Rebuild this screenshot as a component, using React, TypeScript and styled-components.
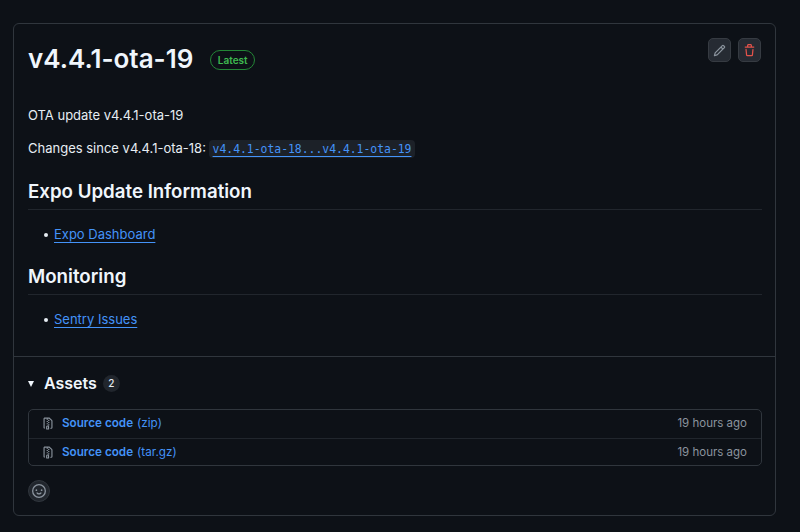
import React from "react";
import styled, { createGlobalStyle } from "styled-components";

const Global = createGlobalStyle`
  html, body { margin: 0; padding: 0; background: #0d1117; }
  body { width: 800px; height: 532px; overflow: hidden; font-family: Inter, "Liberation Sans", sans-serif; color: #e6edf3; }
  * { box-sizing: border-box; }
`;
const Page = styled.div`
  padding: 23px 24px 0 13px;
`;
const Card = styled.section`
  height: 493px;
  border: 1px solid #30363d;
  border-radius: 6px;
  display: flex;
  flex-direction: column;
`;
const Main = styled.div`
  height: 333px;
  padding: 0 13px 0 14px;
  border-bottom: 1px solid #30363d;
`;
const Header = styled.header`
  height: 70px;
  display: flex;
  align-items: center;
  gap: 17px;
  position: relative;
`;
const Title = styled.h1`
  margin: 0;
  font-size: 26px;
  line-height: 70px;
  font-weight: 600;
  color: #f0f6fc;
`;
const Badge = styled.span`
  font-size: 10px;
  font-weight: 600;
  line-height: 18px;
  height: 20px;
  padding: 0 6.5px;
  border: 1px solid #238636;
  border-radius: 10px;
  color: #3fb950;
  margin-top: 2px;
`;
const Actions = styled.div`
  position: absolute;
  top: 14px;
  right: 1px;
  display: flex;
  gap: 7px;
`;
const IconButton = styled.button<{ $danger?: boolean }>`
  width: 23px;
  height: 24px;
  padding: 0;
  display: flex;
  align-items: center;
  justify-content: center;
  background: #262b33;
  border: 1px solid #363b42;
  border-radius: 5px;
  color: ${(p) => (p.$danger ? "#e5534b" : "#8b949e")};
`;
const Para = styled.p`
  margin: 0 0 12px;
  font-size: 13px;
  line-height: 21px;
  color: #e6edf3;
`;
const Body = styled.div`
  padding-top: 11px;
`;
const CodeLink = styled.a`
  font-family: "DejaVu Sans Mono", "Liberation Mono", monospace;
  font-size: 11.4px;
  padding: 2px 4px;
  margin-left: -1px;
  background: #1c2128;
  border-radius: 4px;
  color: #4493f8;
  text-decoration: underline;
  text-underline-offset: 3px;
`;
const Heading = styled.h2<{ $first?: boolean }>`
  margin: ${(p) => (p.$first ? "18px" : "0")} 0 0;
  height: 32px;
  font-size: 18.7px;
  line-height: 28px;
  font-weight: 600;
  color: #f0f6fc;
  border-bottom: 1px solid #21262d;
`;
const List = styled.ul`
  margin: 14px 0 0;
  padding: 0 0 0 16px;
  list-style: none;
  font-size: 13px;
  line-height: 21px;
  height: 39px;
`;
const Item = styled.li`
  display: flex;
  align-items: center;
  &::before {
    content: "";
    width: 4px;
    height: 4px;
    margin-right: 6px;
    border-radius: 50%;
    background: #e6edf3;
  }
`;
const Link = styled.a`
  color: #4493f8;
  text-decoration: underline;
  text-underline-offset: 3px;
`;
const AssetsSection = styled.div`
  padding: 0 13px 0 14px;
`;
const AssetsHead = styled.div`
  display: flex;
  align-items: center;
  height: 52px;
`;
const Caret = styled.span`
  width: 0;
  height: 0;
  border-left: 3.5px solid transparent;
  border-right: 3.5px solid transparent;
  border-top: 6px solid #f0f6fc;
  margin: 2px 10px 0 0;
`;
const AssetsTitle = styled.h3`
  margin: 0 6px 0 0;
  font-size: 16px;
  font-weight: 600;
  color: #f0f6fc;
`;
const Counter = styled.span`
  min-width: 17px;
  height: 17px;
  border-radius: 9px;
  background: #21262d;
  font-size: 10px;
  font-weight: 500;
  line-height: 17px;
  text-align: center;
  color: #e6edf3;
`;
const AssetList = styled.div`
  height: 57px;
  border: 1px solid #30363d;
  border-radius: 5px;
`;
const Row = styled.div`
  height: 28px;
  display: flex;
  align-items: center;
  padding: 0 14px 2px;
  font-size: 11.7px;
  & + & { border-top: 1px solid #21262d; padding-bottom: 1px; }
`;
const ZipIcon = styled.svg`
  color: #8b949e;
  margin: 0 8px 0 -1px;
  flex: none;
`;
const AssetName = styled.span`
  color: #4493f8;
  font-weight: 600;
`;
const AssetExt = styled.span`
  color: #4493f8;
  font-weight: 400;
  margin-left: 4px;
`;
const Time = styled.span`
  margin-left: auto;
  color: #8b949e;
  font-size: 11.5px;
`;
const Reaction = styled.button`
  display: flex;
  align-items: center;
  justify-content: center;
  margin-top: 14px;
  width: 22px;
  height: 22px;
  padding: 0;
  border-radius: 50%;
  background: #21262d;
  border: 1px solid #30363d;
  color: #8b949e;
`;

const Zip = () => (
  <ZipIcon width="12" height="13" viewBox="0 0 16 16" fill="currentColor">
    <path d="M3.5 1.75v11.5c0 .09.048.173.126.217a.75.75 0 0 1-.752 1.298A1.748 1.748 0 0 1 2 13.25V1.75C2 .784 2.784 0 3.75 0h5.586c.464 0 .909.185 1.237.513l2.914 2.914c.329.328.513.773.513 1.237v8.586A1.75 1.75 0 0 1 12.25 15h-.5a.75.75 0 0 1 0-1.5h.5a.25.25 0 0 0 .25-.25V4.664a.25.25 0 0 0-.073-.177L9.513 1.573a.25.25 0 0 0-.177-.073H7.25a.75.75 0 0 1 0 1.5h-.5a.75.75 0 0 1 0-1.5h-3a.25.25 0 0 0-.25.25Zm3.75 8.75h.5c.966 0 1.75.784 1.75 1.75v3a.75.75 0 0 1-.75.75h-2.5a.75.75 0 0 1-.75-.75v-3c0-.966.784-1.75 1.75-1.75ZM6 5.25a.75.75 0 0 1 .75-.75h.5a.75.75 0 0 1 0 1.5h-.5A.75.75 0 0 1 6 5.25Zm.75 2.25h.5a.75.75 0 0 1 0 1.5h-.5a.75.75 0 0 1 0-1.5ZM8 6.75A.75.75 0 0 1 8.75 6h.5a.75.75 0 0 1 0 1.5h-.5A.75.75 0 0 1 8 6.75ZM8.75 3h.5a.75.75 0 0 1 0 1.5h-.5a.75.75 0 0 1 0-1.5ZM8 9.75A.75.75 0 0 1 8.75 9h.5a.75.75 0 0 1 0 1.5h-.5A.75.75 0 0 1 8 9.75Zm-1 2.5v2.25h1v-2.25a.25.25 0 0 0-.25-.25h-.5a.25.25 0 0 0-.25.25Z" />
  </ZipIcon>
);

export default function App() {
  return (
    <Page>
      <Global />
      <Card>
        <Main>
          <Header>
            <Title>v4.4.1-ota-19</Title>
            <Badge>Latest</Badge>
            <Actions>
              <IconButton aria-label="Edit">
                <svg width="13" height="13" viewBox="0 0 16 16" fill="currentColor">
                  <path d="M11.013 1.427a1.75 1.75 0 0 1 2.474 0l1.086 1.086a1.75 1.75 0 0 1 0 2.474l-8.61 8.61c-.21.21-.47.364-.756.445l-3.251.93a.75.75 0 0 1-.927-.928l.929-3.25c.081-.286.235-.547.445-.758l8.61-8.61Zm.176 4.823L9.75 4.81l-6.286 6.287a.253.253 0 0 0-.064.108l-.558 1.953 1.953-.558a.253.253 0 0 0 .108-.064Zm1.238-3.763a.25.25 0 0 0-.354 0L10.811 3.75l1.439 1.44 1.263-1.263a.25.25 0 0 0 0-.354Z" />
                </svg>
              </IconButton>
              <IconButton $danger aria-label="Delete">
                <svg width="13" height="13" viewBox="0 0 16 16" fill="currentColor">
                  <path d="M11 1.75V3h2.25a.75.75 0 0 1 0 1.5H2.75a.75.75 0 0 1 0-1.5H5V1.75C5 .784 5.784 0 6.75 0h2.5C10.216 0 11 .784 11 1.75ZM4.496 6.675l.66 6.6a.25.25 0 0 0 .249.225h5.19a.25.25 0 0 0 .249-.225l.66-6.6a.75.75 0 0 1 1.492.149l-.66 6.6A1.748 1.748 0 0 1 10.595 15h-5.19a1.75 1.75 0 0 1-1.741-1.575l-.66-6.6a.75.75 0 1 1 1.492-.15ZM6.5 1.75V3h3V1.75a.25.25 0 0 0-.25-.25h-2.5a.25.25 0 0 0-.25.25Z" />
                </svg>
              </IconButton>
            </Actions>
          </Header>
          <Body>
            <Para>OTA update v4.4.1-ota-19</Para>
            <Para>
              Changes since v4.4.1-ota-18: <CodeLink>v4.4.1-ota-18...v4.4.1-ota-19</CodeLink>
            </Para>
            <Heading $first>Expo Update Information</Heading>
            <List>
              <Item><Link>Expo Dashboard</Link></Item>
            </List>
            <Heading>Monitoring</Heading>
            <List>
              <Item><Link>Sentry Issues</Link></Item>
            </List>
          </Body>
        </Main>
        <AssetsSection>
          <AssetsHead>
            <Caret />
            <AssetsTitle>Assets</AssetsTitle>
            <Counter>2</Counter>
          </AssetsHead>
          <AssetList>
            <Row>
              <Zip />
              <AssetName>Source code</AssetName>
              <AssetExt>(zip)</AssetExt>
              <Time>19 hours ago</Time>
            </Row>
            <Row>
              <Zip />
              <AssetName>Source code</AssetName>
              <AssetExt>(tar.gz)</AssetExt>
              <Time>19 hours ago</Time>
            </Row>
          </AssetList>
          <Reaction aria-label="Add reaction">
            <svg width="14" height="14" viewBox="0 0 16 16" fill="currentColor">
              <path d="M8 0a8 8 0 1 1 0 16A8 8 0 0 1 8 0ZM1.5 8a6.5 6.5 0 1 0 13 0 6.5 6.5 0 0 0-13 0Zm3.82 1.636a.75.75 0 0 1 1.038.175l.007.009c.103.118.22.222.35.31.264.178.683.37 1.285.37.602 0 1.02-.192 1.285-.371.13-.088.247-.192.35-.31l.007-.008a.75.75 0 0 1 1.222.87l-.022-.015c.02.013.021.015.021.015v.001l-.001.002-.002.003-.005.007-.014.019a2.066 2.066 0 0 1-.184.213c-.16.166-.338.316-.53.445-.63.418-1.37.638-2.127.629-.946 0-1.652-.308-2.126-.63a3.331 3.331 0 0 1-.715-.657l-.014-.02-.005-.006-.002-.003v-.002h-.001l.613-.432-.614.43a.75.75 0 0 1 .183-1.044ZM12 7a1 1 0 1 1-2 0 1 1 0 0 1 2 0ZM5 8a1 1 0 1 1 0-2 1 1 0 0 1 0 2Zm5.25 2.25.592.416a97.71 97.71 0 0 0-.592-.416Z" />
            </svg>
          </Reaction>
        </AssetsSection>
      </Card>
    </Page>
  );
}
